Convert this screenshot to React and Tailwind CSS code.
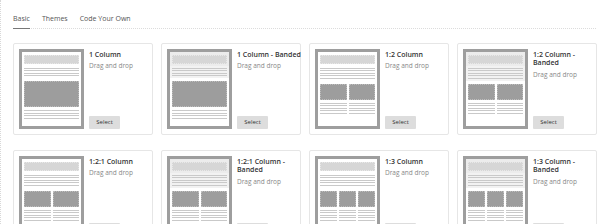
import React from "react";

const templates = [
  { name: "1 Column", layout: "1", banded: false },
  { name: "1 Column - Banded", layout: "1", banded: true },
  { name: "1:2 Column", layout: "2", banded: false },
  { name: "1:2 Column - Banded", layout: "2", banded: true },
  { name: "1:2:1 Column", layout: "2", banded: false },
  { name: "1:2:1 Column - Banded", layout: "2", banded: true },
  { name: "1:3 Column", layout: "3", banded: false },
  { name: "1:3 Column - Banded", layout: "3", banded: true },
];

function Lines({ count = 4 }) {
  return (
    <div className="flex flex-col gap-[1.5px]">
      {Array.from({ length: count }).map((_, i) => (
        <div key={i} className="h-px bg-[#c9c9c9]" />
      ))}
    </div>
  );
}

function Thumb({ layout, banded }) {
  const cols = layout === "1" ? 1 : layout === "2" ? 2 : 3;
  const band = banded ? "bg-[#ececec]" : "bg-white";
  return (
    <div className="w-[65px] h-[80px] shrink-0 border-[3px] border-[#9e9e9e] bg-white flex flex-col overflow-hidden">
      <div className={`${band} px-[2px] pt-[3px] pb-[2px]`}>
        <div className="h-[9px] bg-[#d6d6d6] border border-dotted border-[#e8e8e8]" />
      </div>
      <div className={`px-[2px] pt-[2px] pb-[2px] ${banded ? "bg-[#f2f2f2]" : ""}`}>
        <Lines count={cols === 1 ? 4 : 5} />
      </div>
      <div className="px-[2px] pt-[3px] flex gap-[2px]">
        {Array.from({ length: cols }).map((_, i) => (
          <div key={i} className="flex-1 flex flex-col gap-[3px]">
            <div
              className={`${cols === 1 ? "h-[26px]" : "h-[16px]"} bg-[#9d9d9d] border border-dotted border-[#bdbdbd]`}
            />
            <Lines count={cols === 1 ? 4 : 5} />
          </div>
        ))}
      </div>
    </div>
  );
}

function Card({ t }) {
  return (
    <div className="w-[140px] h-[92px] border border-[#e6e6e6] rounded-[2px] bg-white flex gap-[5px] pt-[5px] pl-[5px] pr-[1px]">
      <Thumb layout={t.layout} banded={t.banded} />
      <div className="flex flex-col flex-1 min-w-0 pb-[5px]">
        <div className="text-[7px] leading-[8.5px] font-semibold text-[#333] pt-[2px] -mr-[3px]">{t.name}</div>
        <div className="text-[6.5px] leading-[8px] text-[#888] mt-[3px]">Drag and drop</div>
        <button className="mt-auto w-[31px] h-[13px] bg-[#dddddd] text-[6px] text-[#333] rounded-[1px]">
          Select
        </button>
      </div>
    </div>
  );
}

export default function App() {
  return (
    <div
      className="w-[608px] h-[224px] overflow-hidden bg-white border-l border-dotted border-[#d8d8d8]"
      style={{ fontFamily: "'Open Sans', sans-serif" }}
    >
      <div className="mx-[12px] pt-[14px] flex gap-[12px] border-b border-dotted border-[#dcdcdc] text-[7px] text-[#555]">
        <div className="pb-[3px] border-b border-[#777] -mb-px">Basic</div>
        <div className="pb-[3px]">Themes</div>
        <div className="pb-[3px]">Code Your Own</div>
      </div>
      <div className="ml-[12px] mt-[14px] grid grid-cols-[repeat(4,140px)] gap-x-[8px] gap-y-[15px]">
        {templates.map((t) => (
          <Card key={t.name} t={t} />
        ))}
      </div>
    </div>
  );
}
